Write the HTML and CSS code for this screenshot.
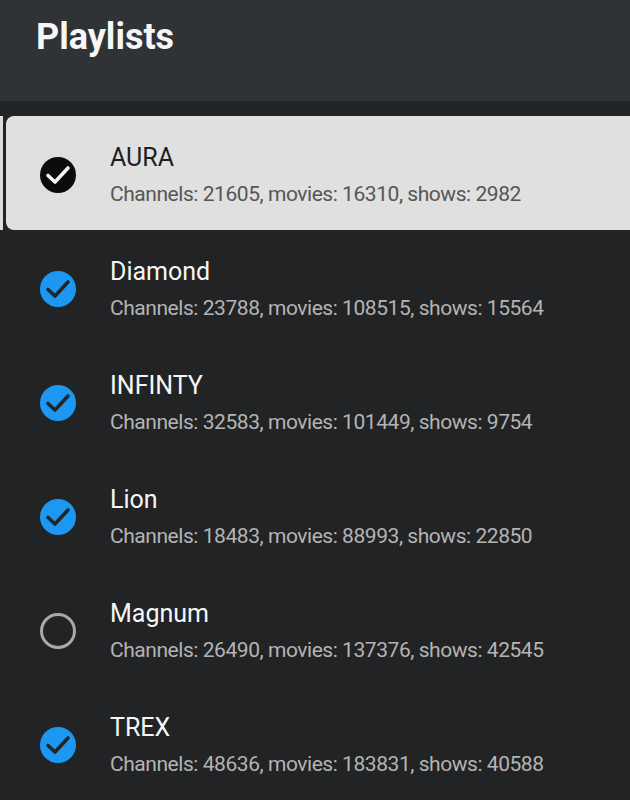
FILE: index.html
```html
<!DOCTYPE html>
<html lang="en">
<head>
    <meta charset="UTF-8">
    <meta name="viewport" content="width=device-width, initial-scale=1.0">
    <title>Playlists</title>
    <link rel="stylesheet" href="styles.css">
</head>
<body>

    <header class="top-bar">
        <h1>Playlists</h1>
    </header>

    <ul class="playlist-list">
        <li class="row selected">
            <div class="card">
                <svg class="mark" viewBox="0 0 38 38"><circle cx="19" cy="19" r="18" class="fill"/><polyline points="9,19.5 16,26 29,12" class="tick"/></svg>
                <div class="info">
                    <div class="name">AURA</div>
                    <div class="stats">Channels: 21605, movies: 16310, shows: 2982</div>
                </div>
            </div>
        </li>
        <li class="row">
            <div class="card">
                <svg class="mark" viewBox="0 0 38 38"><circle cx="19" cy="19" r="18" class="fill"/><polyline points="9,19.5 16,26 29,12" class="tick"/></svg>
                <div class="info">
                    <div class="name">Diamond</div>
                    <div class="stats">Channels: 23788, movies: 108515, shows: 15564</div>
                </div>
            </div>
        </li>
        <li class="row">
            <div class="card">
                <svg class="mark" viewBox="0 0 38 38"><circle cx="19" cy="19" r="18" class="fill"/><polyline points="9,19.5 16,26 29,12" class="tick"/></svg>
                <div class="info">
                    <div class="name">INFINTY</div>
                    <div class="stats">Channels: 32583, movies: 101449, shows: 9754</div>
                </div>
            </div>
        </li>
        <li class="row">
            <div class="card">
                <svg class="mark" viewBox="0 0 38 38"><circle cx="19" cy="19" r="18" class="fill"/><polyline points="9,19.5 16,26 29,12" class="tick"/></svg>
                <div class="info">
                    <div class="name">Lion</div>
                    <div class="stats">Channels: 18483, movies: 88993, shows: 22850</div>
                </div>
            </div>
        </li>
        <li class="row">
            <div class="card">
                <svg class="mark" viewBox="0 0 38 38"><circle cx="19" cy="19" r="16.5" class="ring"/></svg>
                <div class="info">
                    <div class="name">Magnum</div>
                    <div class="stats">Channels: 26490, movies: 137376, shows: 42545</div>
                </div>
            </div>
        </li>
        <li class="row">
            <div class="card">
                <svg class="mark" viewBox="0 0 38 38"><circle cx="19" cy="19" r="18" class="fill"/><polyline points="9,19.5 16,26 29,12" class="tick"/></svg>
                <div class="info">
                    <div class="name">TREX</div>
                    <div class="stats">Channels: 48636, movies: 183831, shows: 40588</div>
                </div>
            </div>
        </li>
    </ul>

</body>
</html>
```

FILE: styles.css
```css
body {
    margin: 0;
    padding: 0;
    background-color: #222324;
    font-family: Roboto, "Noto Sans", sans-serif;
    color: #f4f4f4;
}
.top-bar {
    height: 101px;
    background-color: #303335;
    box-sizing: border-box;
    padding: 15px 0 0 36px;
}
.top-bar h1 {
    margin: 0;
    font-size: 36px;
    font-weight: 700;
    line-height: 44px;
    color: #f6f6f6;
}
.playlist-list {
    list-style: none;
    margin: 0;
    padding: 15px 0 0 0;
}
.row {
    padding-left: 6px;
}
.card {
    display: flex;
    align-items: center;
    height: 114px;
    padding-left: 33px;
    gap: 33px;
}
.mark {
    width: 38px;
    height: 38px;
    flex-shrink: 0;
    margin-top: 4px;
}
.mark .fill {
    fill: #1c98f2;
}
.mark .tick {
    fill: none;
    stroke: #232425;
    stroke-width: 3.6;
    stroke-linecap: round;
    stroke-linejoin: round;
}
.mark .ring {
    fill: none;
    stroke: #a9a9a9;
    stroke-width: 3;
}
.info {
    display: flex;
    flex-direction: column;
    gap: 8px;
    padding-top: 3px;
}
.name {
    font-size: 25px;
    line-height: 30px;
    color: #f6f6f6;
}
.stats {
    font-size: 21px;
    line-height: 26px;
    color: #b4b4b4;
    letter-spacing: -0.45px;
}
.row.selected {
    padding-left: 3px;
    border-left: 3px solid #dcdcdc;
}
.row.selected .card {
    background-color: #dfe0df;
    border-radius: 8px 0 0 8px;
}
.row.selected .fill {
    fill: #0c0c0c;
}
.row.selected .tick {
    stroke: #f4f4f4;
}
.row.selected .name {
    color: #1e1e1e;
}
.row.selected .stats {
    color: #555657;
}
```
